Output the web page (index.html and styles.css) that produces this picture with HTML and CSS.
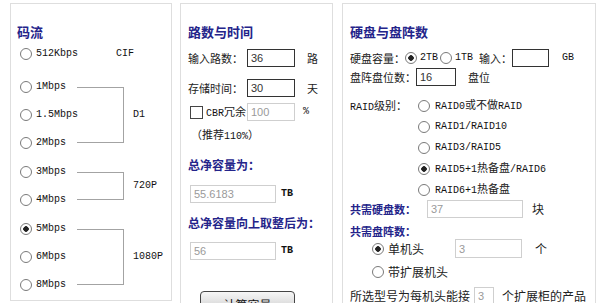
FILE: index.html
```html
<!DOCTYPE html>
<html lang="zh-CN">
<head>
    <meta charset="UTF-8">
    <meta name="viewport" content="width=device-width, initial-scale=1.0">
    <title>存储容量计算</title>
    <link rel="stylesheet" href="styles.css">
</head>
<body>
<div class="page">

    <!-- 码流 -->
    <div class="panel panel-rate">
        <h3 class="title">码流</h3>
        <div class="group group-cif">
            <div class="rates">
                <label class="rate"><input type="radio" class="radio" name="rate"><span class="en">512Kbps</span></label>
            </div>
            <span class="res en">CIF</span>
        </div>
        <div class="group">
            <div class="rates">
                <label class="rate"><input type="radio" class="radio" name="rate"><span class="en">1Mbps</span></label>
                <label class="rate"><input type="radio" class="radio" name="rate"><span class="en">1.5Mbps</span></label>
                <label class="rate"><input type="radio" class="radio" name="rate"><span class="en">2Mbps</span></label>
            </div>
            <div class="bracket"></div>
            <span class="res en">D1</span>
        </div>
        <div class="group">
            <div class="rates">
                <label class="rate"><input type="radio" class="radio" name="rate"><span class="en">3Mbps</span></label>
                <label class="rate"><input type="radio" class="radio" name="rate"><span class="en">4Mbps</span></label>
            </div>
            <div class="bracket"></div>
            <span class="res en">720P</span>
        </div>
        <div class="group">
            <div class="rates">
                <label class="rate"><input type="radio" class="radio" name="rate" checked><span class="en">5Mbps</span></label>
                <label class="rate"><input type="radio" class="radio" name="rate"><span class="en">6Mbps</span></label>
                <label class="rate"><input type="radio" class="radio" name="rate"><span class="en">8Mbps</span></label>
            </div>
            <div class="bracket"></div>
            <span class="res en">1080P</span>
        </div>
    </div>

    <!-- 路数与时间 -->
    <div class="panel panel-time">
        <h3 class="title">路数与时间</h3>
        <div class="field f-first">
            <span class="lbl">输入路数：</span>
            <input type="text" class="box" value="36">
            <span class="unit">路</span>
        </div>
        <div class="field">
            <span class="lbl">存储时间：</span>
            <input type="text" class="box" value="30">
            <span class="unit">天</span>
        </div>
        <div class="field f-cbr">
            <label class="lbl"><input type="checkbox" class="check"><span><span class="en">CBR</span>冗余</span></label>
            <input type="text" class="box off" value="100" disabled>
            <span class="pct en">%</span>
        </div>
        <p class="hint">（推荐<span class="en">110%</span>）</p>
        <h4 class="sub">总净容量为：</h4>
        <div class="field">
            <input type="text" class="box wide off" value="55.6183" disabled>
            <span class="tb en">TB</span>
        </div>
        <h4 class="sub">总净容量向上取整后为：</h4>
        <div class="field f-last">
            <input type="text" class="box wide off" value="56" disabled>
            <span class="tb en">TB</span>
        </div>
        <button class="calc">计算容量</button>
    </div>

    <!-- 硬盘与盘阵数 -->
    <div class="panel panel-disk">
        <h3 class="title">硬盘与盘阵数</h3>
        <div class="field d-size">
            <span>硬盘容量：</span>
            <label class="opt"><input type="radio" class="radio" name="size" checked><span class="en">2TB</span></label>
            <label class="opt opt-2"><input type="radio" class="radio" name="size"><span class="en">1TB</span></label>
            <span class="ask">输入：</span>
            <input type="text" class="box gb">
            <span class="gb-unit en">GB</span>
        </div>
        <div class="field d-slot">
            <span>盘阵盘位数：</span>
            <input type="text" class="box slot" value="16">
            <span class="unit">盘位</span>
        </div>
        <div class="raid">
            <span class="raid-lbl"><span class="en">RAID</span>级别：</span>
            <div class="raid-list">
                <label class="raid-opt"><input type="radio" class="radio" name="raid"><span><span class="en">RAID0</span>或不做<span class="en">RAID</span></span></label>
                <label class="raid-opt"><input type="radio" class="radio" name="raid"><span class="en">RAID1/RAID10</span></label>
                <label class="raid-opt"><input type="radio" class="radio" name="raid"><span class="en">RAID3/RAID5</span></label>
                <label class="raid-opt"><input type="radio" class="radio" name="raid" checked><span><span class="en">RAID5+1</span>热备盘<span class="en">/RAID6</span></span></label>
                <label class="raid-opt"><input type="radio" class="radio" name="raid"><span><span class="en">RAID6+1</span>热备盘</span></label>
            </div>
        </div>
        <div class="field d-disks">
            <span class="sub">共需硬盘数：</span>
            <input type="text" class="box need off" value="37" disabled>
            <span class="unit">块</span>
        </div>
        <h4 class="sub d-arr">共需盘阵数：</h4>
        <div class="field d-head">
            <label class="head-opt"><input type="radio" class="radio" name="head" checked>单机头</label>
            <input type="text" class="box arr off" value="3" disabled>
            <span class="unit">个</span>
        </div>
        <div class="field d-ext">
            <label class="head-opt"><input type="radio" class="radio" name="head">带扩展机头</label>
        </div>
        <div class="field d-model">
            <span>所选型号为每机头能接</span>
            <input type="text" class="box tiny off" value="3" disabled>
            <span class="unit">个扩展柜的产品</span>
        </div>
    </div>

</div>
</body>
</html>
```

FILE: styles.css
```css
*{
    margin: 0;
    padding: 0;
    box-sizing: border-box;
}
html, body{
    overflow: hidden;
}
body{
    background: #fff;
    color: #222;
    font-family: "Noto Sans CJK SC", sans-serif;
    font-size: 11px;
    line-height: 16px;
}
.en{
    font-family: "Liberation Mono", monospace;
    font-size: 10px;
    color: #111;
}

.page{
    display: flex;
    align-items: flex-start;
    padding: 3px 0 0 10px;
}
.panel{
    border: 1px solid #dedede;
    padding-top: 20px;
}
.panel-rate{
    width: 162px;
    padding-left: 9px;
    padding-bottom: 1px;
}
.panel-time{
    width: 153px;
    height: 340px;
    margin-left: 8px;
    padding-left: 7px;
}
.panel-disk{
    width: 254px;
    height: 340px;
    margin-left: 9px;
    padding-left: 7px;
}
.title{
    font-size: 13px;
    line-height: 16px;
    font-weight: bold;
    color: #24248a;
}
.panel-rate .title{
    margin-left: -3px;
}
.sub{
    font-size: 12px;
    line-height: 16px;
    font-weight: bold;
    color: #24248a;
}

/* radios and checkbox */
.radio{
    appearance: none;
    flex: none;
    width: 12px;
    height: 12px;
    margin: 0;
    border: 1px solid #7a7a7a;
    border-radius: 50%;
    background: #fff;
}
.radio:checked{
    background: radial-gradient(circle, #222 0 2.5px, #fff 3px);
}
.check{
    appearance: none;
    flex: none;
    width: 13px;
    height: 13px;
    margin: 0 3px 0 2px;
    border: 1px solid #444;
    background: #fff;
}

/* 码流 */
.group{
    display: flex;
    margin-top: 1px;
}
.group-cif{
    margin-top: 0;
    margin-bottom: 5px;
}
.rates{
    width: 57px;
}
.rate{
    display: flex;
    align-items: center;
    gap: 4px;
    height: 28px;
}
.bracket{
    width: 47px;
    margin: 14px 0;
    border: 1px solid #a3a3a3;
    border-left: 0;
}
.res{
    align-self: center;
    margin-left: 9px;
}
.group-cif .res{
    margin-left: 39px;
}

/* fields */
.field{
    display: flex;
    align-items: center;
    height: 18px;
    margin-top: 12px;
}
.lbl{
    display: flex;
    align-items: center;
    width: 59px;
}
.box{
    width: 48px;
    height: 18px;
    padding: 0 3px;
    border: 1px solid #333;
    outline: 0;
    background: #fff;
    color: #333;
    font-family: "Liberation Sans", sans-serif;
    font-size: 11px;
}
.box.off{
    border-color: #cfcfcf;
    background: #fff;
    color: #9a9a9a;
    -webkit-text-fill-color: #9a9a9a;
}
.unit{
    margin-left: 12px;
}
.pct{
    margin-left: 8px;
}

/* 路数与时间 */
.f-first{
    margin-top: 9px;
}
.f-cbr{
    margin-top: 6px;
}
.hint{
    margin: 5px 0 0 3px;
}
.panel-time .sub{
    margin-top: 12px;
}
.wide{
    width: 86px;
    margin-left: 2px;
}
.tb{
    margin-left: 5px;
    font-weight: bold;
}
.f-last{
    margin-top: 11px;
}
.calc{
    display: block;
    width: 95px;
    height: 26px;
    margin: 31px 0 0 12px;
    border: 1px solid #444;
    border-radius: 4px;
    background: linear-gradient(#f6f6f6, #c4c4c4);
    color: #111;
    font-family: "Noto Sans CJK SC", sans-serif;
    font-size: 12px;
}

/* 硬盘与盘阵数 */
.d-size{
    margin-top: 9px;
}
.opt{
    display: flex;
    align-items: center;
    gap: 3px;
}
.opt-2{
    margin-left: 2px;
}
.ask{
    margin-left: 6px;
}
.gb{
    width: 37px;
}
.gb-unit{
    margin-left: 13px;
}
.d-slot{
    margin-top: 1px;
}
.slot{
    width: 40px;
}
.raid{
    display: flex;
    margin-top: 9px;
}
.raid-lbl{
    width: 68px;
    line-height: 21px;
}
.raid-opt{
    display: flex;
    align-items: center;
    gap: 5px;
    height: 21px;
}
.d-disks{
    margin-top: 0;
}
.d-disks .sub{
    font-size: 11px;
}
.need{
    width: 96px;
    margin-left: 11px;
}
.d-disks .unit{
    margin-left: 9px;
    font-size: 12px;
}
.d-arr{
    font-size: 11px;
    margin-top: 5px;
}
.d-head, .d-ext{
    padding-left: 22px;
    font-size: 12px;
}
.d-head{
    height: 19px;
    margin-top: 0;
}
.head-opt{
    display: flex;
    align-items: center;
    gap: 4px;
    width: 83px;
}
.arr{
    width: 67px;
    height: 19px;
}
.d-head .unit{
    margin-left: 13px;
}
.d-ext{
    margin-top: 5px;
}
.d-model{
    margin-top: 6px;
    font-size: 12px;
}
.tiny{
    width: 20px;
    margin-left: 4px;
}
.d-model .unit{
    margin-left: 8px;
}
```
